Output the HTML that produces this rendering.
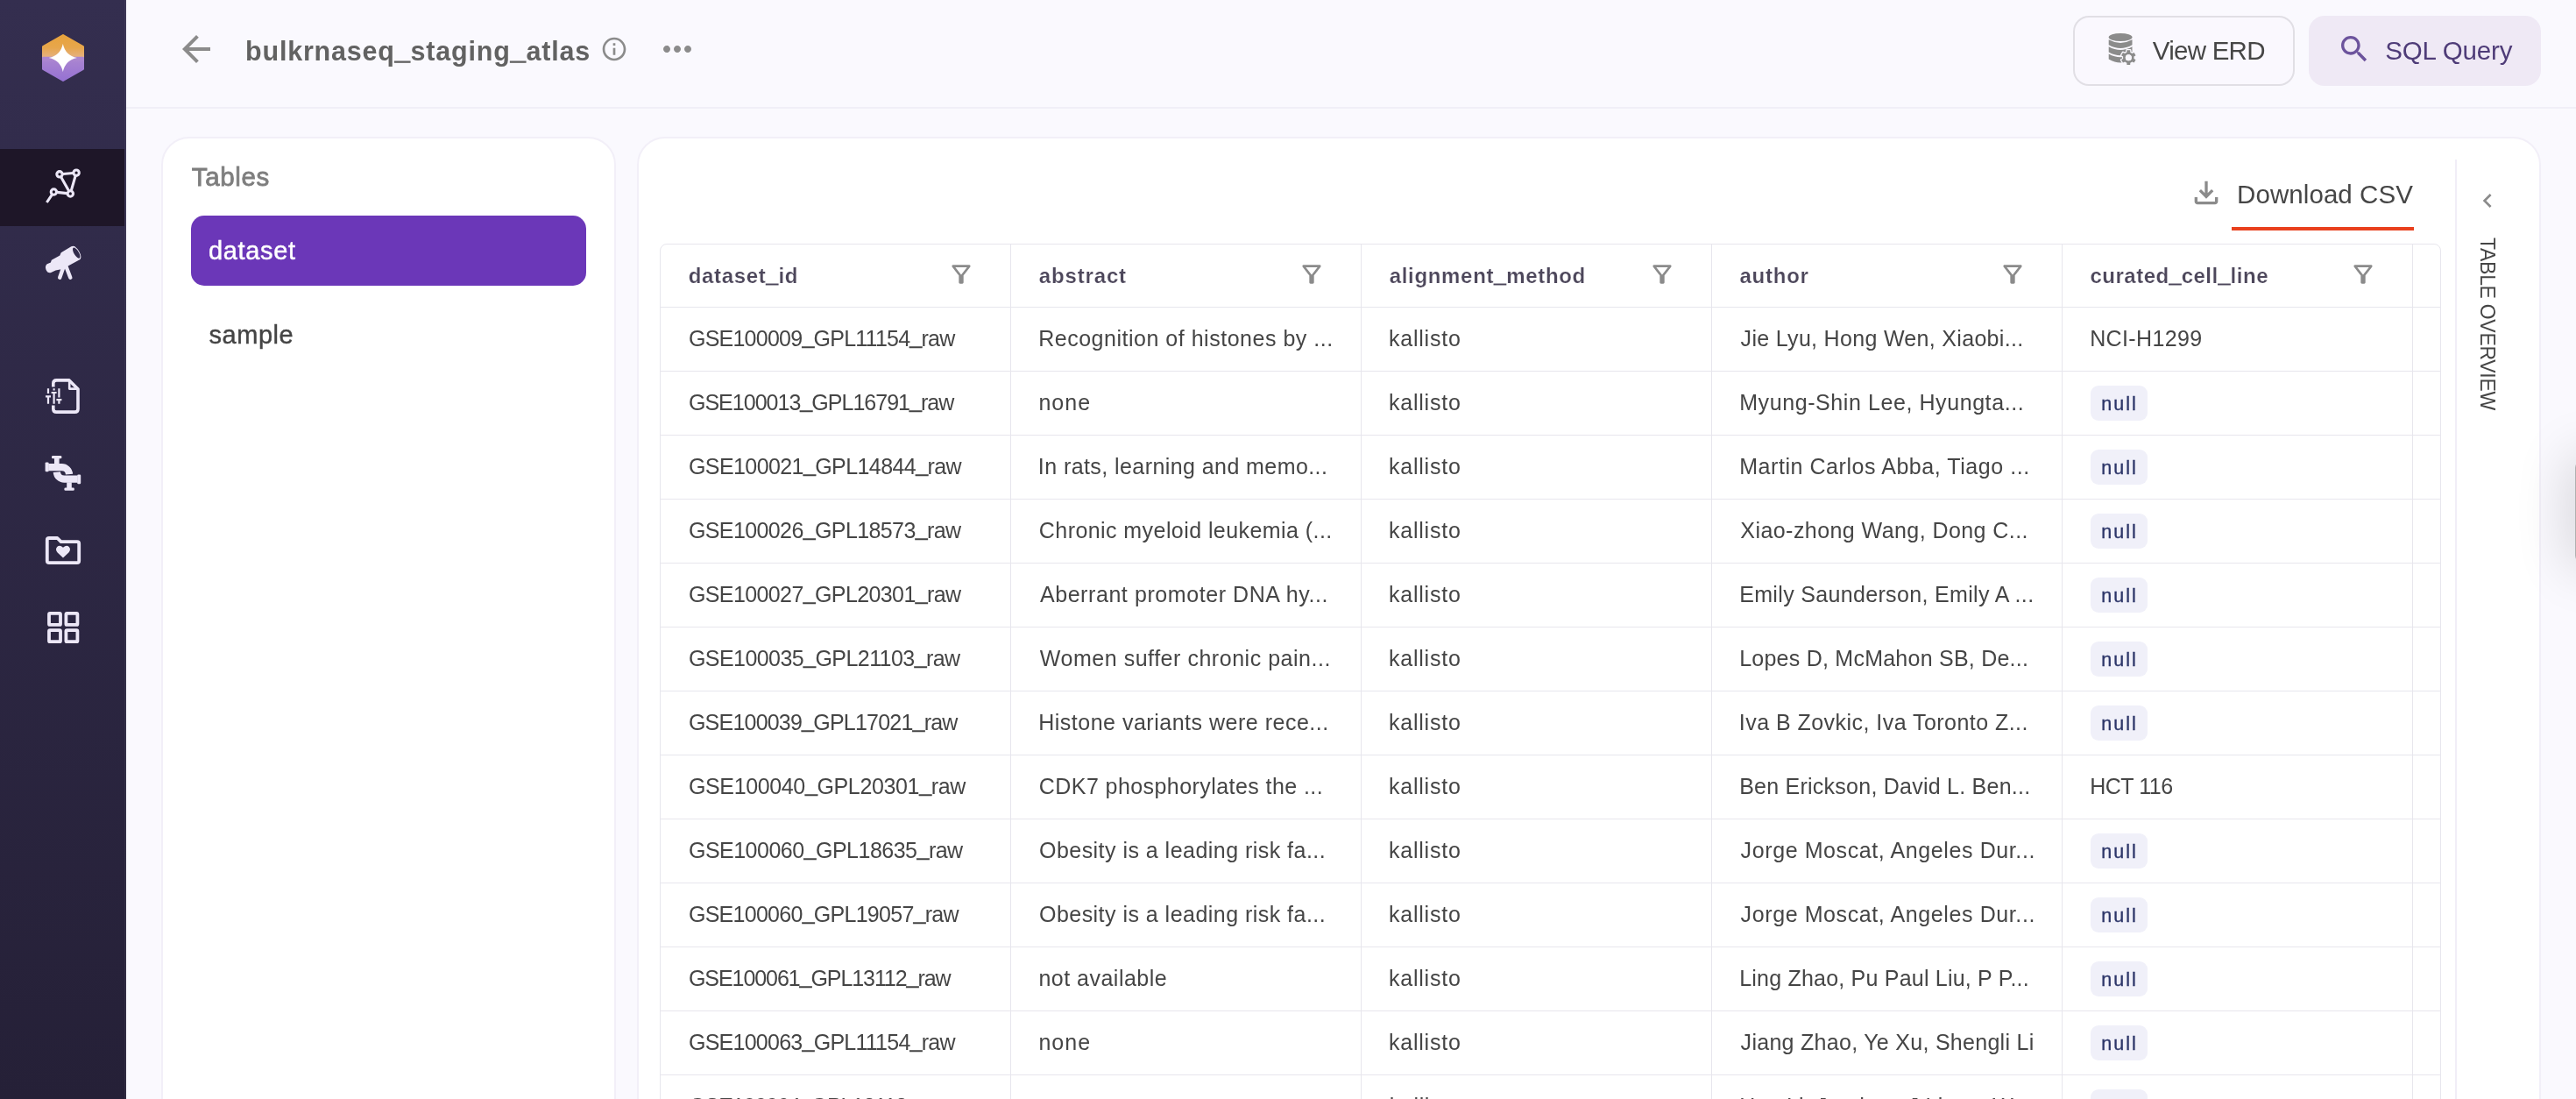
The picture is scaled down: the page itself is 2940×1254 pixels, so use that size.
<!DOCTYPE html>
<html><head><meta charset="utf-8"><title>bulkrnaseq_staging_atlas</title>
<style>
*{box-sizing:border-box;margin:0;padding:0}
html,body{width:2940px;height:1254px;overflow:hidden;background:#faf9fe;font-family:"Liberation Sans", sans-serif;}
.t{position:absolute;white-space:pre;display:block}
.u{position:relative;top:-3px;-webkit-text-stroke:0.4px #454545}
.uh{position:relative;top:-0.6px;-webkit-text-stroke:1.0px #4d475b}
.ut{position:relative;top:-1.8px;-webkit-text-stroke:1.2px #626262}
#tx{position:absolute;left:0;top:0;width:2940px;height:1254px;will-change:transform}
.i{position:absolute;display:block;overflow:visible}
#sb{position:absolute;left:0;top:0;width:144px;height:1254px;background:linear-gradient(180deg,#342e4f 0%,#252037 100%)}
#sbb{position:absolute;left:142px;top:0;width:2px;height:1254px;background:rgba(255,255,255,.05)}
#sba{position:absolute;left:0;top:170px;width:142px;height:88px;background:#1e1628}
#hb{position:absolute;left:144px;top:122px;width:2796px;height:2px;background:#f1eff7}
#b1{position:absolute;left:2366px;top:18px;width:253px;height:80px;border:2px solid #e1dfe5;border-radius:18px;background:#faf8fe}
#b2{position:absolute;left:2635px;top:18px;width:265px;height:80px;border-radius:18px;background:#efe9f5}
#c1{position:absolute;left:184px;top:156px;width:519px;height:1200px;border:2px solid #f2eff8;border-radius:32px;background:#fff}
#c2{position:absolute;left:727px;top:156px;width:2173px;height:1200px;border:2px solid #f2eff8;border-radius:32px;background:#fff}
#dsb{position:absolute;left:218px;top:246px;width:451px;height:80px;border-radius:15px;background:#6b37b8}
#ul{position:absolute;left:2547px;top:259px;width:208px;height:4px;background:#e9401d}
#vd{position:absolute;left:2802px;top:182px;width:2px;height:1100px;background:#f1eef7}
#tov{position:absolute;left:2855.10px;top:270.90px;width:0;height:0;white-space:pre;font-size:23px;line-height:32px;color:#454545;letter-spacing:-0.299px;transform:rotate(90deg);transform-origin:0 0}
#tov{}
#sh{position:absolute;left:2938.8px;top:526px;width:40px;height:116px;border-radius:8px;background:#b0b0b0;box-shadow:0 0 60px 8px rgba(0,0,0,.15)}
.tbl{position:absolute;left:753px;top:278px;width:2033px;height:1100px;border:1px solid #e7e6ed;border-radius:8px 8px 0 0;background:#fff}
.vl{position:absolute;top:279px;width:1px;height:1000px;background:#e7e6ed}
.hl{position:absolute;left:754px;width:2031px;height:1px;background:#e7e6ed}
.nb{position:absolute;left:2386px;width:65px;height:39.6px;border-radius:9px;background:#f0f0f9}
</style></head><body>

<div id="sb"></div><div id="sbb"></div><div id="sba"></div>
<svg class="i" style="left:44px;top:34px" width="56" height="64" viewBox="44 34 56 64">
 <defs>
  <linearGradient id="go" x1="0" y1="0" x2="0" y2="1"><stop offset="0" stop-color="#e8a33c"/><stop offset="0.55" stop-color="#e7a64c"/><stop offset="1" stop-color="#e5b284"/></linearGradient>
  <linearGradient id="gp" x1="0" y1="0" x2="0" y2="1"><stop offset="0" stop-color="#ab86d0"/><stop offset="1" stop-color="#9672d3"/></linearGradient>
  <clipPath id="hx"><path d="M72 40.2 L94.8 53.2 L94.8 78.8 L72 91.8 L49.2 78.8 L49.2 53.2 Z" stroke="#000" stroke-width="2.4" stroke-linejoin="round"/></clipPath>
 </defs>
 <path d="M72 40.2 L94.8 53.2 L94.8 66 L49.2 66 L49.2 53.2 Z" fill="url(#go)" stroke="url(#go)" stroke-width="2.4" stroke-linejoin="round"/>
 <path d="M49.2 66 L94.8 66 L94.8 78.8 L72 91.8 L49.2 78.8 Z" fill="url(#gp)" stroke="url(#gp)" stroke-width="2.4" stroke-linejoin="round"/>
 <path d="M48 66.2 Q56 64.6 60 66 L84 66 Q88 64.6 96 66.2 L96 70 L48 70 Z" fill="#ab86d0"/>
 <path d="M71.8 50 Q74.6 63.4 88 66 Q74.6 68.6 71.8 82 Q69 68.6 55.6 66 Q69 63.4 71.8 50 Z" fill="#fff"/>
</svg>
<!-- constellation -->
<svg class="i" style="left:44px;top:186px" width="56" height="56" viewBox="44 186 56 56" fill="none" stroke="#ece7f7" stroke-width="3.1" stroke-linecap="butt">
 <circle cx="68" cy="198.8" r="3.2"/><circle cx="87.1" cy="197.2" r="3.2"/><circle cx="80.3" cy="221" r="3.2"/><circle cx="61.4" cy="219" r="3.2"/>
 <path d="M72 198.5 L83.2 197.5 M69.8 202.3 L78.4 217.5 M86 201 L81.4 217.2 M65.3 219.4 L76.4 220.6 M59.2 222.3 L53.4 231"/>
</svg>
<!-- telescope -->
<svg class="i" style="left:48px;top:276px" width="48" height="48" viewBox="48 276 48 48">
 <g fill="#ece7f7">
 <path d="M53.7 301.3 L57.900 299.4 L58.800 296.7 L68.300 291.5 L69.700 288.2 L81.300 281.3 Q83.500 280 85.500 281.300 L92.200 293 Q92.400 295.400 91 296.300 L77.700 303.400 L69.800 307.200 L63.500 308.400 L58.200 311.100 Q54.500 312.300 52.500 307.800 Q51 303.600 53.700 301.300 Z"/>
 <ellipse cx="87.1" cy="288.5" rx="3.6" ry="8.2" transform="rotate(-31 87.3 288.5)"/>
 </g>
 <g stroke="#ece7f7" stroke-width="4.4" stroke-linecap="round" fill="none">
  <path d="M72.4 304.8 L68.200 316.700"/><path d="M75.400 304 L80.300 316.700"/>
 </g>
 <ellipse cx="87.2" cy="288.6" rx="2.7" ry="6.9" transform="rotate(-31 87.2 288.6)" fill="#312b4b"/>
</svg>
<!-- file sliders -->
<svg class="i" style="left:48px;top:428px" width="48" height="48" viewBox="48 428 48 48" fill="none" stroke="#ece7f7" stroke-width="3.6" stroke-linejoin="round" stroke-linecap="butt">
 <path d="M60.8 441.5 V437.6 Q60.8 433.9 64.5 433.9 H79 L89 444 V466.4 Q89 470.1 85.3 470.1 H64.5 Q60.8 470.1 60.8 466.4 V462.5"/>
 <path d="M79.2 434.5 V443.6 H88.4" stroke-width="2.6"/>
 <g stroke-width="2.2"><path d="M55 443.2 V449 M55 452.2 V460.8 M61.6 443.2 V445.6 M61.6 448.8 V460.8 M67.4 443.2 V453.6 M67.4 456.8 V460.8"/>
 <path d="M52 452.4 H58 M58.6 448 H64.6 M64.4 456.2 H70.4"/></g>
</svg>
<!-- pipe -->
<svg class="i" style="left:48px;top:516px" width="48" height="48" viewBox="48 516 48 48" fill="#ece7f7">
 <path d="M55.200 533.1 H70.4 A8.600 8.600 0 0 1 79 541.1" fill="none" stroke="#ece7f7" stroke-width="8.2"/>
 <path d="M88.600 546.6 H73.4 A8.600 8.600 0 0 1 64.8 538.6" fill="none" stroke="#ece7f7" stroke-width="8.2"/>
 <rect x="51.6" y="527.4" width="4" height="10.8" rx="1.200"/>
 <rect x="88.2" y="541.5" width="4" height="10.8" rx="1.200"/>
 <rect x="62" y="522.4" width="5.600" height="7"/>
 <rect x="76.2" y="550.3" width="5.600" height="7"/>
 <rect x="59" y="520" width="11.400" height="3.200" rx="1.300"/>
 <rect x="73.4" y="556.5" width="11.400" height="3.200" rx="1.300"/>
</svg>
<!-- folder heart -->
<svg class="i" style="left:48px;top:606px" width="48" height="44" viewBox="48 606 48 44">
 <path d="M56 614 H65.4 L69.6 618.2 H88 Q90.2 618.2 90.2 620.4 V640 Q90.2 642.2 88 642.2 H56 Q53.8 642.2 53.8 640 V616.2 Q53.8 614 56 614 Z" fill="none" stroke="#ece7f7" stroke-width="3.8" stroke-linejoin="round"/>
 <path d="M72 636.6 L65.6 630.4 Q62.6 627 65.2 624 Q68.2 621.2 72 624.8 Q75.8 621.2 78.8 624 Q81.4 627 78.4 630.4 Z" fill="#ece7f7"/>
</svg>
<!-- grid -->
<svg class="i" style="left:50px;top:694px" width="44" height="44" viewBox="50 694 44 44" fill="none" stroke="#ece7f7" stroke-width="3.8" stroke-linejoin="round">
 <rect x="56" y="699.9" width="13" height="13" rx="1"/><rect x="75.4" y="699.9" width="13" height="13" rx="1"/>
 <rect x="56" y="719.2" width="13" height="13" rx="1"/><rect x="75.4" y="719.2" width="13" height="13" rx="1"/>
</svg>


<div id="hb"></div>
<svg class="i" style="left:200.3px;top:32px" width="48" height="48" viewBox="0 0 24 24" fill="#8b8b8b" ><path d="M20 11H7.83l5.59-5.59L12 4l-8 8 8 8 1.41-1.41L7.83 13H20v-2z"/></svg>
<svg class="i" style="left:685.3px;top:40.0px" width="32" height="32" viewBox="0 0 24 24" fill="#8b8b8b" ><path d="M11 7h2v2h-2zm0 4h2v6h-2zm1-9C6.48 2 2 6.48 2 12s4.48 10 10 10 10-4.48 10-10S17.52 2 12 2zm0 18c-4.41 0-8-3.590-8-8s3.590-8 8-8 8 3.590 8 8-3.590 8-8 8z"/></svg>
<svg class="i" style="left:749.4px;top:31.8px" width="48" height="48" viewBox="0 0 24 24" fill="#8b8b8b" ><path d="M6 10c-1.100 0-2 .9-2 2s.9 2 2 2 2-.9 2-2-.9-2-2-2zm12 0c-1.100 0-2 .9-2 2s.9 2 2 2 2-.9 2-2-.9-2-2-2zm-6 0c-1.100 0-2 .9-2 2s.9 2 2 2 2-.9 2-2-.9-2-2-2z"/></svg>
<div id="b1"></div><div id="b2"></div>
<!-- db+gear icon -->
<svg class="i" style="left:2400px;top:32px" width="44" height="48" viewBox="2400 32 44 48">
 <g fill="#8b8b8b">
 <ellipse cx="2420.1" cy="42.5" rx="13.4" ry="4.6"/>
 <path d="M2406.7 45.2 Q2420.1 52.6 2433.500 45.2 V51.200 Q2420.1 58.800 2406.7 51.200 Z"/>
 <path d="M2406.7 53.300 Q2420.1 60.800 2433.500 53.300 V59.4 Q2420.1 67 2406.7 59.4 Z"/>
 <path d="M2406.7 61.500 Q2420.1 69 2433.500 61.500 V67.600 Q2420.1 75.6 2406.7 67.600 Z"/>
 </g>
 <path d="M2431.31 59.73 L2431.18 57.31 L2427.42 57.31 L2427.29 59.73 L2425.13 60.97 L2422.97 59.88 L2421.09 63.13 L2423.12 64.45 L2423.12 66.95 L2421.09 68.27 L2422.97 71.52 L2425.13 70.43 L2427.29 71.67 L2427.42 74.09 L2431.18 74.09 L2431.31 71.67 L2433.47 70.43 L2435.63 71.52 L2437.51 68.27 L2435.48 66.95 L2435.48 64.45 L2437.51 63.13 L2435.63 59.88 L2433.47 60.97 Z M2425.80 65.70 a3.5 3.5 0 1 0 7.0 0 a3.5 3.5 0 1 0 -7.0 0 Z" fill="#8b8b8b" fill-rule="evenodd" stroke="#f9f7fd" stroke-width="2.6" stroke-linejoin="round" paint-order="stroke"/>
 <circle cx="2429.3" cy="65.7" r="3.5" fill="#f9f7fd"/>
</svg>
<svg class="i" style="left:2666.8px;top:36.2px" width="40" height="40" viewBox="0 0 24 24" fill="#6c539c" ><path d="M15.5 14h-.79l-.28-.27C15.41 12.590 16 11.110 16 9.500 16 5.910 13.090 3 9.500 3S3 5.910 3 9.500 5.910 16 9.500 16c1.610 0 3.090-.590 4.230-1.570l.27.280v.790l5 4.990L20.490 19l-4.990-5zm-6 0C7.010 14 5 11.990 5 9.500S7.010 5 9.500 5 14 7.010 14 9.500 11.990 14 9.500 14z"/></svg>


<div id="c1"></div><div id="c2"></div>
<div id="dsb"></div>
<svg class="i" style="left:2498.4px;top:200.1px" width="40" height="40" viewBox="0 0 24 24" fill="#8b8b8b" ><path d="M12 16l-5-5 1.4-1.450 2.6 2.6V4h2v8.150l2.6-2.6L17 11zm-6 4q-.825 0-1.412-.587T4 18v-3h2v3h12v-3h2v3q0 .825-.587 1.413T18 20z"/></svg>
<div id="ul"></div>
<div id="vd"></div>
<svg class="i" style="left:2822.5px;top:213.2px" width="32" height="32" viewBox="0 0 24 24" fill="#8b8b8b" ><path d="M15.410 7.410L14 6l-6 6 6 6 1.410-1.410L10.830 12z"/></svg>
<div id="sh"></div>

<div class="tbl"></div><div class="vl" style="left:1153px"></div><div class="vl" style="left:1553px"></div><div class="vl" style="left:1953px"></div><div class="vl" style="left:2353px"></div><div class="vl" style="left:2753px"></div><div class="hl" style="top:350px"></div><div class="hl" style="top:423px"></div><div class="hl" style="top:496px"></div><div class="hl" style="top:569px"></div><div class="hl" style="top:642px"></div><div class="hl" style="top:715px"></div><div class="hl" style="top:788px"></div><div class="hl" style="top:861px"></div><div class="hl" style="top:934px"></div><div class="hl" style="top:1007px"></div><div class="hl" style="top:1080px"></div><div class="hl" style="top:1153px"></div><div class="hl" style="top:1226px"></div><svg class="i" style="left:1081.1px;top:297.1px" width="32" height="32" viewBox="0 0 24 24" fill="#8b8b8b" ><path d="M7 6h10l-5.01 6.3L7 6zm-2.75-.39C6.27 8.2 10 13 10 13v6c0 .55.45 1 1 1h2c.55 0 1-.45 1-1v-6s3.72-4.8 5.74-7.39c.51-.66.04-1.61-.79-1.61H5.04c-.83 0-1.3.95-.79 1.61z"/></svg><svg class="i" style="left:1481.1px;top:297.1px" width="32" height="32" viewBox="0 0 24 24" fill="#8b8b8b" ><path d="M7 6h10l-5.01 6.3L7 6zm-2.75-.39C6.27 8.2 10 13 10 13v6c0 .55.45 1 1 1h2c.55 0 1-.45 1-1v-6s3.72-4.8 5.74-7.39c.51-.66.04-1.61-.79-1.61H5.04c-.83 0-1.3.95-.79 1.61z"/></svg><svg class="i" style="left:1881.1px;top:297.1px" width="32" height="32" viewBox="0 0 24 24" fill="#8b8b8b" ><path d="M7 6h10l-5.01 6.3L7 6zm-2.75-.39C6.27 8.2 10 13 10 13v6c0 .55.45 1 1 1h2c.55 0 1-.45 1-1v-6s3.72-4.8 5.74-7.39c.51-.66.04-1.61-.79-1.61H5.04c-.83 0-1.3.95-.79 1.61z"/></svg><svg class="i" style="left:2281.1px;top:297.1px" width="32" height="32" viewBox="0 0 24 24" fill="#8b8b8b" ><path d="M7 6h10l-5.01 6.3L7 6zm-2.75-.39C6.27 8.2 10 13 10 13v6c0 .55.45 1 1 1h2c.55 0 1-.45 1-1v-6s3.72-4.8 5.74-7.39c.51-.66.04-1.61-.79-1.61H5.04c-.83 0-1.3.95-.79 1.61z"/></svg><svg class="i" style="left:2681.1px;top:297.1px" width="32" height="32" viewBox="0 0 24 24" fill="#8b8b8b" ><path d="M7 6h10l-5.01 6.3L7 6zm-2.75-.39C6.27 8.2 10 13 10 13v6c0 .55.45 1 1 1h2c.55 0 1-.45 1-1v-6s3.72-4.8 5.74-7.39c.51-.66.04-1.61-.79-1.61H5.04c-.83 0-1.3.95-.79 1.61z"/></svg><div class="nb" style="top:440.1px"></div><div class="nb" style="top:513.1px"></div><div class="nb" style="top:586.1px"></div><div class="nb" style="top:659.1px"></div><div class="nb" style="top:732.1px"></div><div class="nb" style="top:805.1px"></div><div class="nb" style="top:951.1px"></div><div class="nb" style="top:1024.1px"></div><div class="nb" style="top:1097.1px"></div><div class="nb" style="top:1170.1px"></div><div class="nb" style="top:1243.1px"></div>
<div id="tx"><span class="t" style="left:280.02px;top:38px;font-size:30.5px;line-height:40px;font-weight:700;color:#626262;letter-spacing:0.804px;">bulkrnaseq<span class="ut">_</span>staging<span class="ut">_</span>atlas</span><span class="t" style="left:2456.86px;top:38px;font-size:29.5px;line-height:39px;font-weight:400;color:#464646;letter-spacing:-0.753px;">View ERD</span><span class="t" style="left:2722.30px;top:38px;font-size:29.5px;line-height:39px;font-weight:400;color:#4f3c78;letter-spacing:-0.154px;">SQL Query</span><span class="t" style="left:218.84px;top:182px;font-size:29.5px;line-height:39px;font-weight:400;color:#7e7e7e;letter-spacing:0.633px;-webkit-text-stroke:0.8px #7e7e7e;">Tables</span><span class="t" style="left:237.97px;top:267px;font-size:29px;line-height:38px;font-weight:400;color:#ffffff;letter-spacing:0.666px;-webkit-text-stroke:0.45px #fff;">dataset</span><span class="t" style="left:238.50px;top:363px;font-size:29px;line-height:38px;font-weight:400;color:#444;letter-spacing:0.534px;-webkit-text-stroke:0.4px #444;">sample</span><span class="t" style="left:2553.12px;top:202px;font-size:29.5px;line-height:39px;font-weight:400;color:#464646;letter-spacing:0.067px;">Download CSV</span><span class="t" style="left:785.68px;top:298px;font-size:24px;line-height:33px;font-weight:700;color:#4d475b;letter-spacing:0.679px;-webkit-text-stroke:0.2px #fff;">dataset<span class="uh">_</span>id</span><span class="t" style="left:1185.78px;top:298px;font-size:24px;line-height:33px;font-weight:700;color:#4d475b;letter-spacing:0.850px;-webkit-text-stroke:0.2px #fff;">abstract</span><span class="t" style="left:1585.71px;top:298px;font-size:24px;line-height:33px;font-weight:700;color:#4d475b;letter-spacing:0.677px;-webkit-text-stroke:0.2px #fff;">alignment<span class="uh">_</span>method</span><span class="t" style="left:1985.54px;top:298px;font-size:24px;line-height:33px;font-weight:700;color:#4d475b;letter-spacing:0.741px;-webkit-text-stroke:0.2px #fff;">author</span><span class="t" style="left:2385.45px;top:298px;font-size:24px;line-height:33px;font-weight:700;color:#4d475b;letter-spacing:0.516px;-webkit-text-stroke:0.2px #fff;">curated<span class="uh">_</span>cell<span class="uh">_</span>line</span><span class="t" style="left:785.94px;top:369px;font-size:25px;line-height:34px;font-weight:400;color:#454545;letter-spacing:-0.755px;">GSE100009<span class="u">_</span>GPL11154<span class="u">_</span>raw</span><span class="t" style="left:1185.19px;top:369px;font-size:25px;line-height:34px;font-weight:400;color:#454545;letter-spacing:0.515px;">Recognition of histones by ...</span><span class="t" style="left:1584.98px;top:369px;font-size:25px;line-height:34px;font-weight:400;color:#454545;letter-spacing:0.776px;">kallisto</span><span class="t" style="left:1986.62px;top:369px;font-size:25px;line-height:34px;font-weight:400;color:#454545;letter-spacing:0.315px;">Jie Lyu, Hong Wen, Xiaobi...</span><span class="t" style="left:2385.14px;top:369px;font-size:25px;line-height:34px;font-weight:400;color:#454545;letter-spacing:0.371px;">NCI-H1299</span><span class="t" style="left:785.94px;top:442px;font-size:25px;line-height:34px;font-weight:400;color:#454545;letter-spacing:-0.979px;">GSE100013<span class="u">_</span>GPL16791<span class="u">_</span>raw</span><span class="t" style="left:1185.46px;top:442px;font-size:25px;line-height:34px;font-weight:400;color:#454545;letter-spacing:1.011px;">none</span><span class="t" style="left:1584.98px;top:442px;font-size:25px;line-height:34px;font-weight:400;color:#454545;letter-spacing:0.776px;">kallisto</span><span class="t" style="left:1985.19px;top:442px;font-size:25px;line-height:34px;font-weight:400;color:#454545;letter-spacing:0.582px;">Myung-Shin Lee, Hyungta...</span><span class="t" style="left:2398.27px;top:446px;font-size:21.5px;line-height:30px;font-weight:400;color:#2d3669;letter-spacing:2.012px;-webkit-text-stroke:0.35px #2d3669;">null</span><span class="t" style="left:785.94px;top:515px;font-size:25px;line-height:34px;font-weight:400;color:#454545;letter-spacing:-0.582px;">GSE100021<span class="u">_</span>GPL14844<span class="u">_</span>raw</span><span class="t" style="left:1184.83px;top:515px;font-size:25px;line-height:34px;font-weight:400;color:#454545;letter-spacing:0.424px;">In rats, learning and memo...</span><span class="t" style="left:1584.98px;top:515px;font-size:25px;line-height:34px;font-weight:400;color:#454545;letter-spacing:0.776px;">kallisto</span><span class="t" style="left:1985.19px;top:515px;font-size:25px;line-height:34px;font-weight:400;color:#454545;letter-spacing:0.554px;">Martin Carlos Abba, Tiago ...</span><span class="t" style="left:2398.27px;top:519px;font-size:21.5px;line-height:30px;font-weight:400;color:#2d3669;letter-spacing:2.012px;-webkit-text-stroke:0.35px #2d3669;">null</span><span class="t" style="left:785.94px;top:588px;font-size:25px;line-height:34px;font-weight:400;color:#454545;letter-spacing:-0.606px;">GSE100026<span class="u">_</span>GPL18573<span class="u">_</span>raw</span><span class="t" style="left:1185.83px;top:588px;font-size:25px;line-height:34px;font-weight:400;color:#454545;letter-spacing:0.430px;">Chronic myeloid leukemia (...</span><span class="t" style="left:1584.98px;top:588px;font-size:25px;line-height:34px;font-weight:400;color:#454545;letter-spacing:0.776px;">kallisto</span><span class="t" style="left:1986.36px;top:588px;font-size:25px;line-height:34px;font-weight:400;color:#454545;letter-spacing:0.432px;">Xiao-zhong Wang, Dong C...</span><span class="t" style="left:2398.27px;top:592px;font-size:21.5px;line-height:30px;font-weight:400;color:#2d3669;letter-spacing:2.012px;-webkit-text-stroke:0.35px #2d3669;">null</span><span class="t" style="left:785.94px;top:661px;font-size:25px;line-height:34px;font-weight:400;color:#454545;letter-spacing:-0.606px;">GSE100027<span class="u">_</span>GPL20301<span class="u">_</span>raw</span><span class="t" style="left:1186.91px;top:661px;font-size:25px;line-height:34px;font-weight:400;color:#454545;letter-spacing:0.574px;">Aberrant promoter DNA hy...</span><span class="t" style="left:1584.98px;top:661px;font-size:25px;line-height:34px;font-weight:400;color:#454545;letter-spacing:0.776px;">kallisto</span><span class="t" style="left:1985.19px;top:661px;font-size:25px;line-height:34px;font-weight:400;color:#454545;letter-spacing:0.335px;">Emily Saunderson, Emily A ...</span><span class="t" style="left:2398.27px;top:665px;font-size:21.5px;line-height:30px;font-weight:400;color:#2d3669;letter-spacing:2.012px;-webkit-text-stroke:0.35px #2d3669;">null</span><span class="t" style="left:785.94px;top:734px;font-size:25px;line-height:34px;font-weight:400;color:#454545;letter-spacing:-0.561px;">GSE100035<span class="u">_</span>GPL21103<span class="u">_</span>raw</span><span class="t" style="left:1186.87px;top:734px;font-size:25px;line-height:34px;font-weight:400;color:#454545;letter-spacing:0.529px;">Women suffer chronic pain...</span><span class="t" style="left:1584.98px;top:734px;font-size:25px;line-height:34px;font-weight:400;color:#454545;letter-spacing:0.776px;">kallisto</span><span class="t" style="left:1985.19px;top:734px;font-size:25px;line-height:34px;font-weight:400;color:#454545;letter-spacing:0.239px;">Lopes D, McMahon SB, De...</span><span class="t" style="left:2398.27px;top:738px;font-size:21.5px;line-height:30px;font-weight:400;color:#2d3669;letter-spacing:2.012px;-webkit-text-stroke:0.35px #2d3669;">null</span><span class="t" style="left:785.94px;top:807px;font-size:25px;line-height:34px;font-weight:400;color:#454545;letter-spacing:-0.783px;">GSE100039<span class="u">_</span>GPL17021<span class="u">_</span>raw</span><span class="t" style="left:1185.19px;top:807px;font-size:25px;line-height:34px;font-weight:400;color:#454545;letter-spacing:0.506px;">Histone variants were rece...</span><span class="t" style="left:1584.98px;top:807px;font-size:25px;line-height:34px;font-weight:400;color:#454545;letter-spacing:0.776px;">kallisto</span><span class="t" style="left:1984.83px;top:807px;font-size:25px;line-height:34px;font-weight:400;color:#454545;letter-spacing:0.458px;">Iva B Zovkic, Iva Toronto Z...</span><span class="t" style="left:2398.27px;top:811px;font-size:21.5px;line-height:30px;font-weight:400;color:#2d3669;letter-spacing:2.012px;-webkit-text-stroke:0.35px #2d3669;">null</span><span class="t" style="left:785.94px;top:880px;font-size:25px;line-height:34px;font-weight:400;color:#454545;letter-spacing:-0.360px;">GSE100040<span class="u">_</span>GPL20301<span class="u">_</span>raw</span><span class="t" style="left:1185.83px;top:880px;font-size:25px;line-height:34px;font-weight:400;color:#454545;letter-spacing:0.429px;">CDK7 phosphorylates the ...</span><span class="t" style="left:1584.98px;top:880px;font-size:25px;line-height:34px;font-weight:400;color:#454545;letter-spacing:0.776px;">kallisto</span><span class="t" style="left:1985.19px;top:880px;font-size:25px;line-height:34px;font-weight:400;color:#454545;letter-spacing:0.243px;">Ben Erickson, David L. Ben...</span><span class="t" style="left:2385.14px;top:880px;font-size:25px;line-height:34px;font-weight:400;color:#454545;letter-spacing:-0.443px;">HCT 116</span><span class="t" style="left:785.94px;top:953px;font-size:25px;line-height:34px;font-weight:400;color:#454545;letter-spacing:-0.507px;">GSE100060<span class="u">_</span>GPL18635<span class="u">_</span>raw</span><span class="t" style="left:1185.97px;top:953px;font-size:25px;line-height:34px;font-weight:400;color:#454545;letter-spacing:0.469px;">Obesity is a leading risk fa...</span><span class="t" style="left:1584.98px;top:953px;font-size:25px;line-height:34px;font-weight:400;color:#454545;letter-spacing:0.776px;">kallisto</span><span class="t" style="left:1986.62px;top:953px;font-size:25px;line-height:34px;font-weight:400;color:#454545;letter-spacing:0.599px;">Jorge Moscat, Angeles Dur...</span><span class="t" style="left:2398.27px;top:957px;font-size:21.5px;line-height:30px;font-weight:400;color:#2d3669;letter-spacing:2.012px;-webkit-text-stroke:0.35px #2d3669;">null</span><span class="t" style="left:785.94px;top:1026px;font-size:25px;line-height:34px;font-weight:400;color:#454545;letter-spacing:-0.725px;">GSE100060<span class="u">_</span>GPL19057<span class="u">_</span>raw</span><span class="t" style="left:1185.97px;top:1026px;font-size:25px;line-height:34px;font-weight:400;color:#454545;letter-spacing:0.469px;">Obesity is a leading risk fa...</span><span class="t" style="left:1584.98px;top:1026px;font-size:25px;line-height:34px;font-weight:400;color:#454545;letter-spacing:0.776px;">kallisto</span><span class="t" style="left:1986.62px;top:1026px;font-size:25px;line-height:34px;font-weight:400;color:#454545;letter-spacing:0.599px;">Jorge Moscat, Angeles Dur...</span><span class="t" style="left:2398.27px;top:1030px;font-size:21.5px;line-height:30px;font-weight:400;color:#2d3669;letter-spacing:2.012px;-webkit-text-stroke:0.35px #2d3669;">null</span><span class="t" style="left:785.94px;top:1099px;font-size:25px;line-height:34px;font-weight:400;color:#454545;letter-spacing:-1.065px;">GSE100061<span class="u">_</span>GPL13112<span class="u">_</span>raw</span><span class="t" style="left:1185.46px;top:1099px;font-size:25px;line-height:34px;font-weight:400;color:#454545;letter-spacing:0.483px;">not available</span><span class="t" style="left:1584.98px;top:1099px;font-size:25px;line-height:34px;font-weight:400;color:#454545;letter-spacing:0.776px;">kallisto</span><span class="t" style="left:1985.19px;top:1099px;font-size:25px;line-height:34px;font-weight:400;color:#454545;letter-spacing:0.212px;">Ling Zhao, Pu Paul Liu, P P...</span><span class="t" style="left:2398.27px;top:1103px;font-size:21.5px;line-height:30px;font-weight:400;color:#2d3669;letter-spacing:2.012px;-webkit-text-stroke:0.35px #2d3669;">null</span><span class="t" style="left:785.94px;top:1172px;font-size:25px;line-height:34px;font-weight:400;color:#454545;letter-spacing:-0.739px;">GSE100063<span class="u">_</span>GPL11154<span class="u">_</span>raw</span><span class="t" style="left:1185.46px;top:1172px;font-size:25px;line-height:34px;font-weight:400;color:#454545;letter-spacing:1.011px;">none</span><span class="t" style="left:1584.98px;top:1172px;font-size:25px;line-height:34px;font-weight:400;color:#454545;letter-spacing:0.776px;">kallisto</span><span class="t" style="left:1986.62px;top:1172px;font-size:25px;line-height:34px;font-weight:400;color:#454545;letter-spacing:0.286px;">Jiang Zhao, Ye Xu, Shengli Li</span><span class="t" style="left:2398.27px;top:1176px;font-size:21.5px;line-height:30px;font-weight:400;color:#2d3669;letter-spacing:2.012px;-webkit-text-stroke:0.35px #2d3669;">null</span><span class="t" style="left:786.20px;top:1245px;font-size:25px;line-height:34px;font-weight:400;color:#454545;letter-spacing:-1.078px;">GSE100064<span class="u">_</span>GPL13112<span class="u">_</span>raw</span><span class="t" style="left:1186.20px;top:1245px;font-size:25px;line-height:34px;font-weight:400;color:#454545;letter-spacing:0.696px;">none</span><span class="t" style="left:1585.80px;top:1245px;font-size:25px;line-height:34px;font-weight:400;color:#454545;letter-spacing:0.641px;">kallisto</span><span class="t" style="left:1985.20px;top:1245px;font-size:25px;line-height:34px;font-weight:400;color:#454545;letter-spacing:0.220px;">Hua Li, Jundong J Liang, W...</span><span class="t" style="left:2398.60px;top:1249px;font-size:21.5px;line-height:30px;font-weight:400;color:#2d3669;letter-spacing:1.770px;-webkit-text-stroke:0.35px #2d3669;">null</span><div id="tov">TABLE OVERVIEW</div></div>
</body></html>
